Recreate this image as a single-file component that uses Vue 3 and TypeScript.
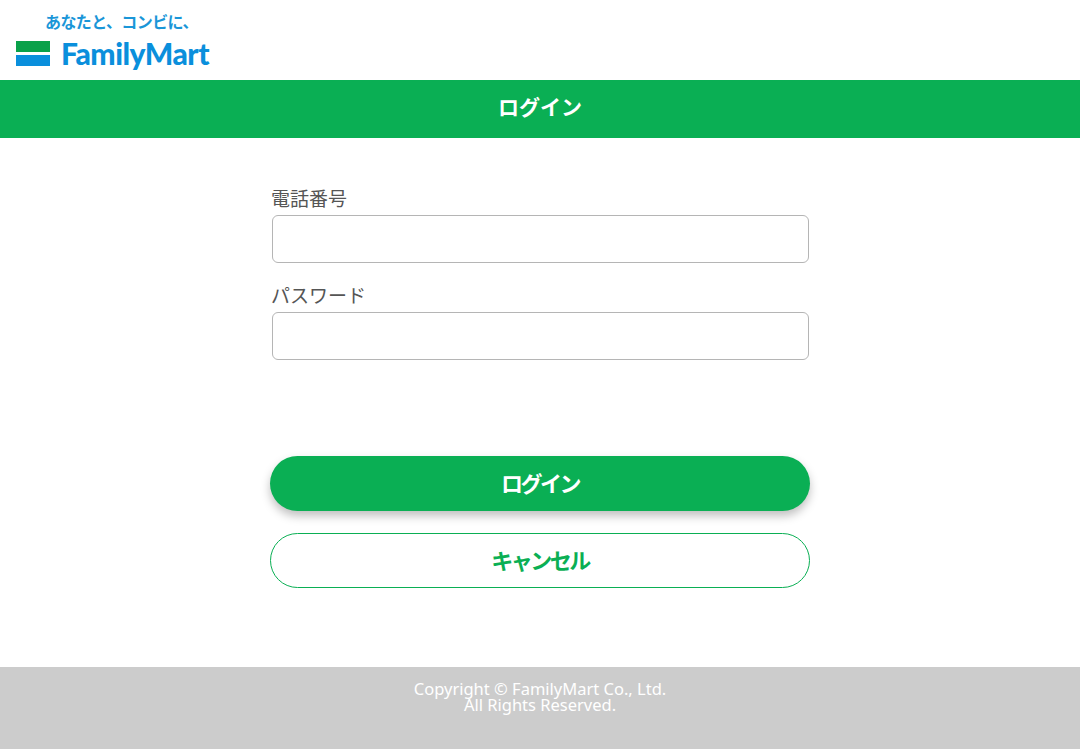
<template>
  <div class="page">
    <header class="site-header">
      <div class="logo">
        <span class="logo-tagline">あなたと、コンビに、</span>
        <div class="logo-main">
          <svg class="logo-flag" width="34" height="25" viewBox="0 0 34 25" aria-hidden="true">
            <rect x="0" y="0" width="34" height="11" fill="#0aa14a" />
            <rect x="0" y="14" width="34" height="11" fill="#0a8fdc" />
          </svg>
          <span class="logo-name">FamilyMart</span>
        </div>
      </div>
    </header>

    <h1 class="page-title">ログイン</h1>

    <main class="login-main">
      <form class="login-form" @submit.prevent>
        <div v-for="field in fields" :key="field.id" class="form-row">
          <label :for="field.id">{{ field.label }}</label>
          <input :id="field.id" v-model="field.value" :type="field.type" />
        </div>
        <div class="button-group">
          <button type="submit" class="btn btn-primary">ログイン</button>
          <button type="button" class="btn btn-outline">キャンセル</button>
        </div>
      </form>
    </main>

    <footer class="site-footer">
      <p>Copyright © FamilyMart Co., Ltd.<br />All Rights Reserved.</p>
    </footer>
  </div>
</template>

<script setup lang="ts">
import { reactive } from 'vue';

interface Field {
  id: string;
  label: string;
  type: string;
  value: string;
}

const fields = reactive<Field[]>([
  { id: 'tel', label: '電話番号', type: 'tel', value: '' },
  { id: 'password', label: 'パスワード', type: 'password', value: '' },
]);
</script>

<style>
html,
body {
  margin: 0;
  background: #fff;
}
</style>

<style scoped>
.page {
  min-height: 749px;
  display: flex;
  flex-direction: column;
  font-family: "Noto Sans CJK JP", "Noto Sans", sans-serif;
  color: #555;
}

.site-header {
  height: 80px;
  padding: 11px 0 0 16px;
  box-sizing: border-box;
}

.logo {
  display: flex;
  flex-direction: column;
  width: 193px;
}

.logo-tagline {
  font-size: 16px;
  line-height: 21px;
  font-weight: 700;
  color: #1a96d8;
  margin-left: 29px;
  letter-spacing: -0.6px;
  white-space: nowrap;
}

.logo-main {
  display: flex;
  align-items: center;
  gap: 11px;
  margin-top: 9px;
}

.logo-flag {
  flex: none;
}

.logo-name {
  font-family: "Lato", "Noto Sans", sans-serif;
  font-size: 30px;
  line-height: 23px;
  font-weight: 900;
  color: #0a8fdc;
  letter-spacing: -0.5px;
  white-space: nowrap;
}

.page-title {
  margin: 0;
  height: 58px;
  line-height: 52px;
  background: #0aaf54;
  color: #fff;
  text-align: center;
  font-size: 21px;
  font-weight: 700;
}

.login-main {
  flex: 1;
  padding-top: 46px;
}

.login-form {
  width: 540px;
  margin: 0 auto;
}

.form-row {
  display: flex;
  flex-direction: column;
  margin-bottom: 18px;
}

.form-row label {
  font-size: 19px;
  line-height: 27px;
  height: 31px;
  margin-left: 1px;
}

.form-row input {
  width: 537px;
  height: 48px;
  margin-left: 2px;
  box-sizing: border-box;
  border: 1px solid #b5b5b5;
  border-radius: 6px;
  background: #fff;
  outline: none;
}

.button-group {
  display: flex;
  flex-direction: column;
  gap: 22px;
  margin-top: 96px;
}

.btn {
  width: 540px;
  height: 55px;
  border-radius: 28px;
  box-sizing: border-box;
  font-family: inherit;
  font-size: 22px;
  font-weight: 700;
  letter-spacing: -2.5px;
  cursor: pointer;
  padding: 0 0 4px;
}

.btn-primary {
  background: #0aaf54;
  border: none;
  color: #fff;
  box-shadow: 0 5px 10px rgba(0, 0, 0, 0.25);
}

.btn-outline {
  background: #fff;
  border: 1px solid #0aaf54;
  color: #0aaf54;
}

.site-footer {
  height: 82px;
  background: #cccccc;
  color: #fff;
  text-align: center;
  font-family: "Noto Sans", sans-serif;
  font-size: 16.5px;
  line-height: 16px;
}

.site-footer p {
  margin: 0;
  padding-top: 14px;
}
</style>
